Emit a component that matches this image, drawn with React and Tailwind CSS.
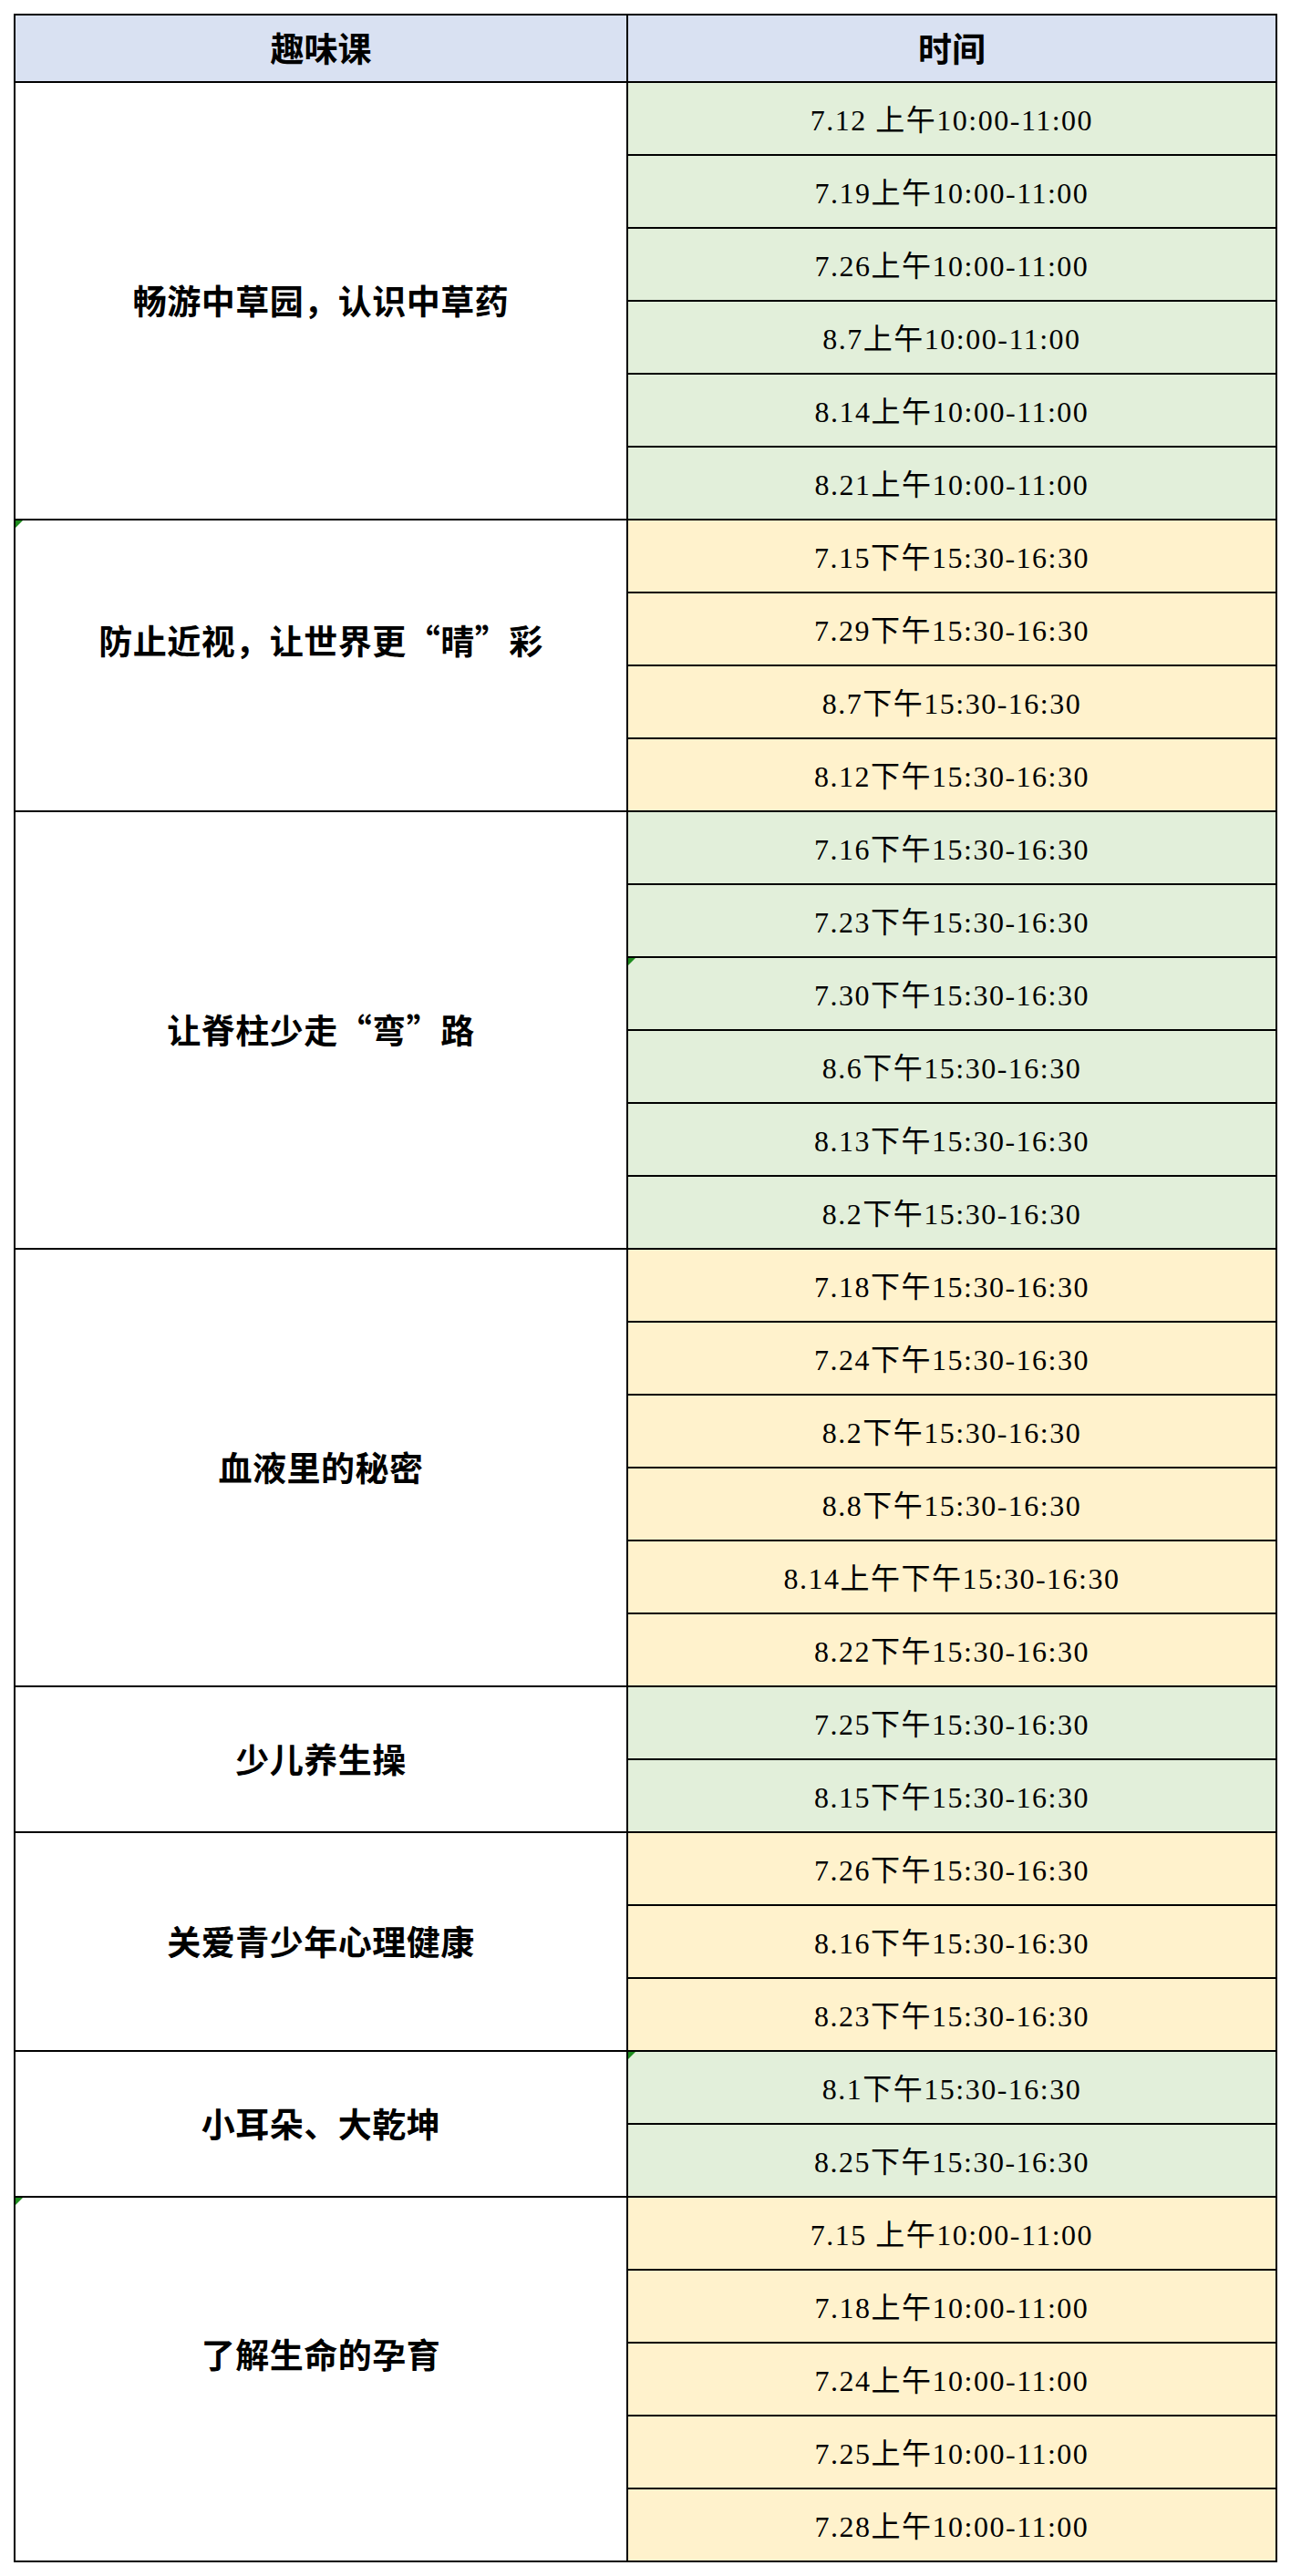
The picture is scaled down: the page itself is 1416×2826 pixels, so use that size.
const AM = "上午10:00-11:00";
const PM = "下午15:30-16:30";

const groups = [
  {
    name: "畅游中草园，认识中草药",
    color: "bg-[#e2efda]",
    times: ["7.12 " + AM, "7.19" + AM, "7.26" + AM, "8.7" + AM, "8.14" + AM, "8.21" + AM],
  },
  {
    name: "防止近视，让世界更“晴”彩",
    color: "bg-[#fff2cc]",
    flag: true,
    times: ["7.15" + PM, "7.29" + PM, "8.7" + PM, "8.12" + PM],
  },
  {
    name: "让脊柱少走“弯”路",
    color: "bg-[#e2efda]",
    flagRow: 2,
    times: ["7.16" + PM, "7.23" + PM, "7.30" + PM, "8.6" + PM, "8.13" + PM, "8.2" + PM],
  },
  {
    name: "血液里的秘密",
    color: "bg-[#fff2cc]",
    times: ["7.18" + PM, "7.24" + PM, "8.2" + PM, "8.8" + PM, "8.14上午" + PM, "8.22" + PM],
  },
  {
    name: "少儿养生操",
    color: "bg-[#e2efda]",
    times: ["7.25" + PM, "8.15" + PM],
  },
  {
    name: "关爱青少年心理健康",
    color: "bg-[#fff2cc]",
    times: ["7.26" + PM, "8.16" + PM, "8.23" + PM],
  },
  {
    name: "小耳朵、大乾坤",
    color: "bg-[#e2efda]",
    flagRow: 0,
    times: ["8.1" + PM, "8.25" + PM],
  },
  {
    name: "了解生命的孕育",
    color: "bg-[#fff2cc]",
    flag: true,
    times: ["7.15 " + AM, "7.18" + AM, "7.24" + AM, "7.25" + AM, "7.28" + AM],
  },
];

const Flag = () => (
  <div className="absolute left-0 top-0 h-0 w-0 border-t-[8px] border-r-[8px] border-t-[#1e8c1e] border-r-transparent" />
);

const titleFont = { fontFamily: '"Noto Sans CJK SC", sans-serif' };
const timeFont = { fontFamily: '"Liberation Serif", "Noto Sans CJK SC", serif' };

export default function App() {
  return (
    <div className="min-h-[2826px] bg-white pt-[15px] pl-[15px] text-black">
      <div className="w-[1386px] border-t-2 border-l-2 border-black">
        <div className="flex h-[74px] bg-[#d9e1f2] text-[37px] font-bold" style={titleFont}>
          <div className="flex w-[672px] items-center justify-center border-r-2 border-b-2 border-black">
            趣味课
          </div>
          <div className="flex w-[712px] items-center justify-center border-r-2 border-b-2 border-black">
            时间
          </div>
        </div>
        {groups.map((g) => (
          <div key={g.name} className="flex">
            <div
              className={`relative flex w-[672px] items-center justify-center border-r-2 border-b-2 border-black text-[37px] font-bold tracking-[0.5px] ${
                g.flag ? "pb-[54px]" : ""
              }`}
              style={titleFont}
            >
              {g.flag && <Flag />}
              {g.name}
            </div>
            <div className="flex w-[712px] flex-col">
              {g.times.map((t, i) => (
                <div
                  key={t}
                  className={`relative flex h-[80px] items-center justify-center border-r-2 border-b-2 border-black pt-[3px] text-[32px] tracking-[1.5px] ${g.color}`}
                  style={timeFont}
                >
                  {g.flagRow === i && <Flag />}
                  {t}
                </div>
              ))}
            </div>
          </div>
        ))}
      </div>
    </div>
  );
}
